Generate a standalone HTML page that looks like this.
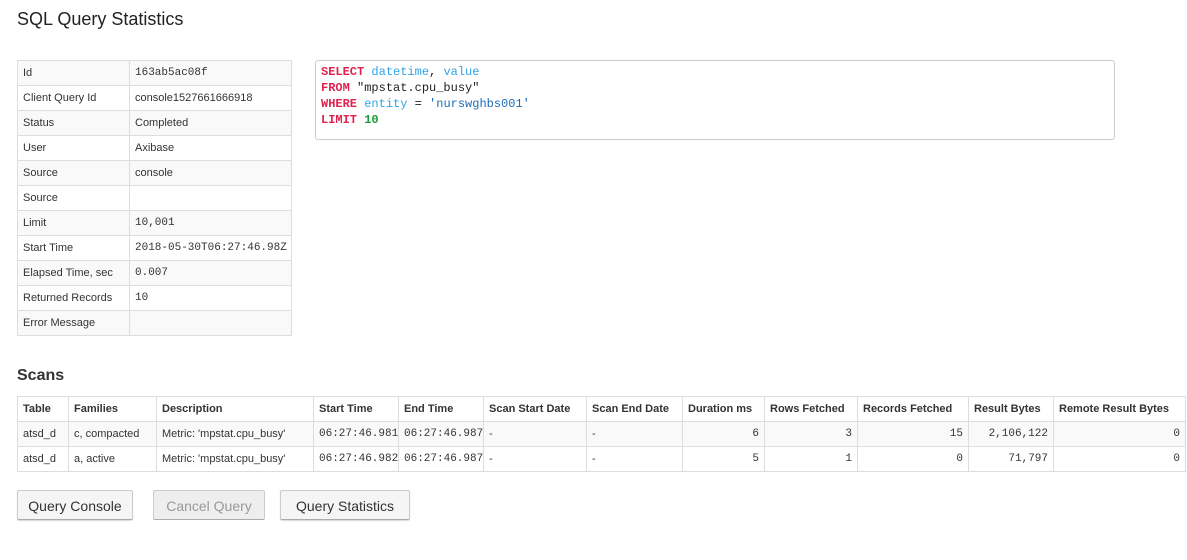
<!DOCTYPE html>
<html><head><meta charset="utf-8"><style>
body{margin:0;background:#fff;font-family:"Liberation Sans",sans-serif;color:#333;font-size:11px;width:1187px;height:560px;overflow:hidden;position:relative}
h1{position:absolute;left:17px;top:9px;margin:0;font-size:18px;font-weight:normal;color:#222}
h2{position:absolute;left:17px;top:367px;margin:0;font-size:16px;font-weight:bold;color:#333}
table{border-collapse:collapse;position:absolute;table-layout:fixed}
td,th{border:1px solid #ddd;padding:0 5px;height:24px;white-space:nowrap;overflow:hidden;text-align:left}
.mono{font-family:"Liberation Mono",monospace;font-size:11px}
#stats{left:17px;top:60px;width:275px}
#stats tr:nth-child(odd){background:#f9f9f9}
#sql{position:absolute;left:315px;top:60px;width:800px;height:80px;border:1px solid #ccc;border-radius:3px;font-family:"Liberation Mono",monospace;font-size:12px;line-height:16px;padding:3px 5px;box-sizing:border-box;color:#222}
.k{color:#e0234e;font-weight:bold}.b{color:#2fa4e7}.s{color:#1e6bb8}.n{color:#1a9a3a;font-weight:bold}
#scans{left:17px;top:396px;width:1169px}
#scans th{font-weight:bold;color:#333}
#scans tr:nth-child(2){background:#f9f9f9}
.r{text-align:right}
.btn{position:absolute;top:490px;height:30px;border:1px solid #ccc;border-bottom-color:#aaa;background:#f5f5f5;font-size:14px;line-height:30px;text-align:center;box-sizing:border-box;border-radius:2px;box-shadow:0 1px 1px rgba(0,0,0,.15);color:#333}
</style></head><body>
<h1>SQL Query Statistics</h1>
<table id="stats"><colgroup><col style="width:112px"><col></colgroup>
<tr><td>Id</td><td class="mono">163ab5ac08f</td></tr>
<tr><td>Client Query Id</td><td>console1527661666918</td></tr>
<tr><td>Status</td><td>Completed</td></tr>
<tr><td>User</td><td>Axibase</td></tr>
<tr><td>Source</td><td>console</td></tr>
<tr><td>Source</td><td></td></tr>
<tr><td>Limit</td><td class="mono">10,001</td></tr>
<tr><td>Start Time</td><td class="mono">2018-05-30T06:27:46.98Z</td></tr>
<tr><td>Elapsed Time, sec</td><td class="mono">0.007</td></tr>
<tr><td>Returned Records</td><td class="mono">10</td></tr>
<tr><td>Error Message</td><td></td></tr>
</table>
<div id="sql"><span class="k">SELECT</span> <span class="b">datetime</span>, <span class="b">value</span><br><span class="k">FROM</span> "mpstat.cpu_busy"<br><span class="k">WHERE</span> <span class="b">entity</span> = <span class="s">'nurswghbs001'</span><br><span class="k">LIMIT</span> <span class="n">10</span></div>
<h2>Scans</h2>
<table id="scans"><colgroup><col style="width:51px"><col style="width:88px"><col style="width:157px"><col style="width:85px"><col style="width:85px"><col style="width:103px"><col style="width:96px"><col style="width:82px"><col style="width:93px"><col style="width:111px"><col style="width:85px"><col></colgroup>
<tr><th>Table</th><th>Families</th><th>Description</th><th>Start Time</th><th>End Time</th><th>Scan Start Date</th><th>Scan End Date</th><th>Duration ms</th><th>Rows Fetched</th><th>Records Fetched</th><th>Result Bytes</th><th>Remote Result Bytes</th></tr>
<tr><td>atsd_d</td><td>c, compacted</td><td>Metric: 'mpstat.cpu_busy'</td><td class="mono">06:27:46.981</td><td class="mono">06:27:46.987</td><td>-</td><td>-</td><td class="r mono">6</td><td class="r mono">3</td><td class="r mono">15</td><td class="r mono">2,106,122</td><td class="r mono">0</td></tr>
<tr><td>atsd_d</td><td>a, active</td><td>Metric: 'mpstat.cpu_busy'</td><td class="mono">06:27:46.982</td><td class="mono">06:27:46.987</td><td>-</td><td>-</td><td class="r mono">5</td><td class="r mono">1</td><td class="r mono">0</td><td class="r mono">71,797</td><td class="r mono">0</td></tr>
</table>
<div class="btn" style="left:17px;width:116px">Query Console</div>
<div class="btn" style="left:153px;width:112px;color:#999;background:#eee;box-shadow:none">Cancel Query</div>
<div class="btn" style="left:280px;width:130px">Query Statistics</div>
</body></html>
